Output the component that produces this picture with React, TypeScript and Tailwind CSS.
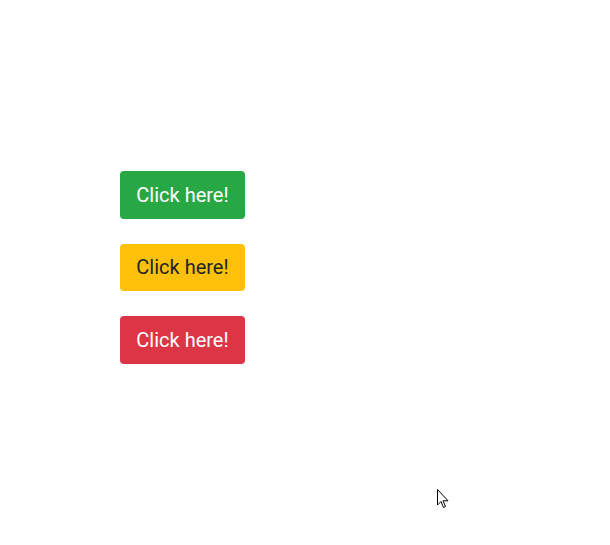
export default function App() {
    const buttons = [
        {cls: "bg-[#28a745] text-white"},
        {cls: "bg-[#ffc107] text-[#212529]"},
        {cls: "bg-[#dc3545] text-white"},
    ]

    return (
        <div className="relative h-[545px] w-[610px] bg-white" style={{fontFamily: "Roboto, sans-serif"}}>
            <div className="flex flex-col items-start gap-[25px] pl-[120px] pt-[171px]">
                {buttons.map((b, i) => (
                    <button
                        key={i}
                        className={`flex h-[47.5px] w-[125px] items-center justify-center rounded-[4px] text-[20px] ${b.cls}`}
                    >
                        Click here!
                    </button>
                ))}
            </div>
            {/* mouse pointer */}
            <svg className="absolute left-[437px] top-[489px]" width="13" height="21" viewBox="0 0 13 21">
                <path d="M0.5 0.5 L0.5 16 L4 12.5 L6.5 18.5 L8.5 17.6 L6 11.8 L11 11.8 Z" fill="white" stroke="black" strokeWidth="1" strokeLinejoin="round" />
            </svg>
        </div>
    )
}
